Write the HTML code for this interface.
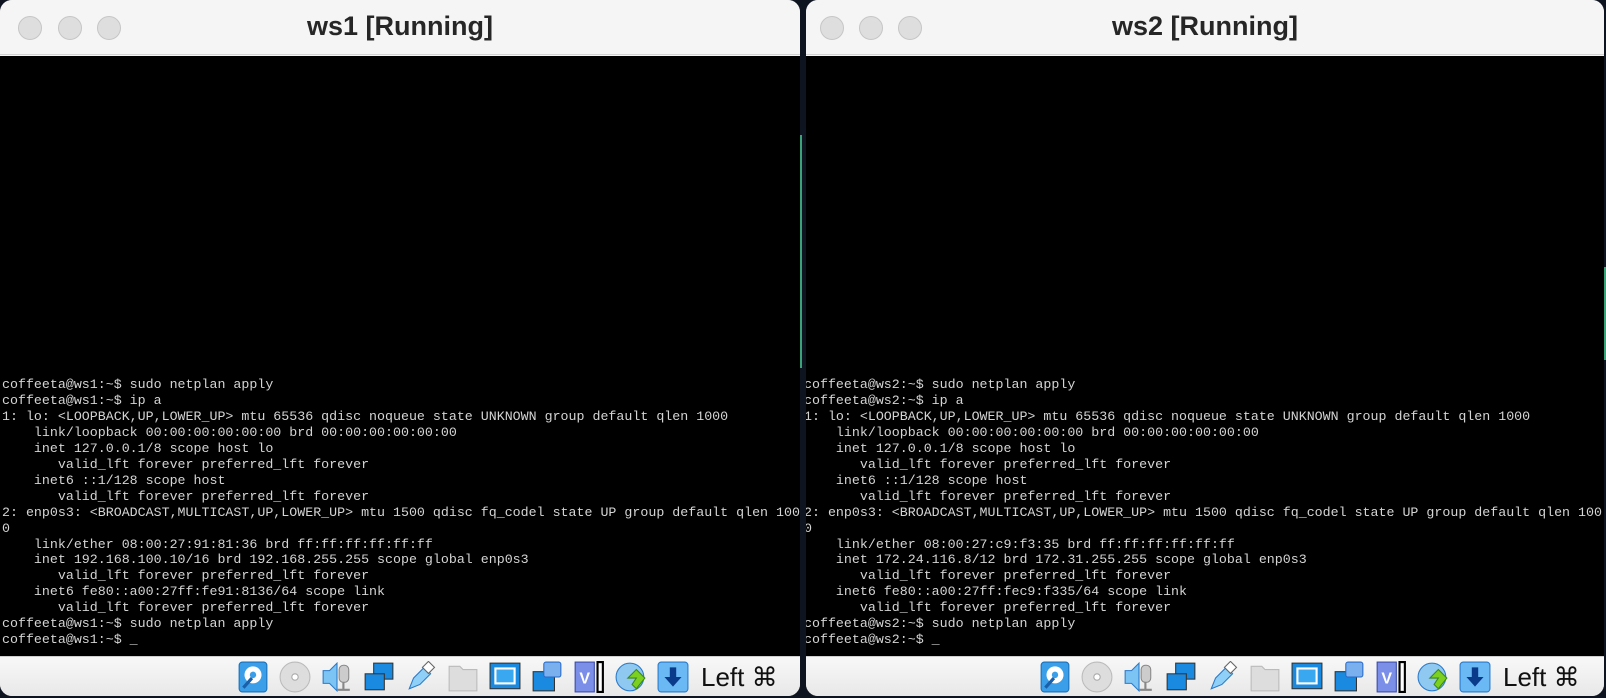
<!DOCTYPE html>
<html><head><meta charset="utf-8"><style>
*{margin:0;padding:0;box-sizing:border-box}
body{width:1606px;height:698px;background:#0f1520;position:relative;overflow:hidden;font-family:"Liberation Sans",sans-serif}
.win{position:absolute;top:0;height:696px;background:#f5f5f5;border-radius:12px;overflow:hidden}
.tb{position:absolute;left:0;right:0;top:0;height:55px;background:#f5f5f5;border-bottom:1px solid #d2d2d2}
.tl{position:absolute;top:16px;width:24px;height:24px;border-radius:50%;background:#dedede;border:1px solid #c6c6c6}
.title{position:absolute;left:0;right:0;top:11px;text-align:center;font-weight:bold;font-size:27px;color:#262626}
.term{position:absolute;left:0;right:0;top:56px;height:600px;background:#000}
pre{position:absolute;left:2px;top:321px;font-family:"Liberation Mono",monospace;font-size:13.3px;line-height:15.95px;color:#d4d4d4;white-space:pre}
.bar{position:absolute;left:0;right:0;top:656px;height:40px;background:linear-gradient(#f8f8f8,#e8e8e8);border-top:1px solid #cfcfcf}
.icons{position:absolute;top:4px;height:32px;display:flex;align-items:center}
.icons svg{width:32px;height:32px;margin-right:10px}
.left{font-size:26px;color:#111;font-weight:500;margin-left:2px}
.green{position:absolute;width:2px;background:#3aa37a}
</style></head><body>

<div class="win" style="left:0;width:800px">
 <div class="tb"><div class="tl" style="left:18px"></div><div class="tl" style="left:58px"></div><div class="tl" style="left:97px"></div><div class="title">ws1 [Running]</div></div>
 <div class="term"><pre>coffeeta@ws1:~$ sudo netplan apply
coffeeta@ws1:~$ ip a
1: lo: &lt;LOOPBACK,UP,LOWER_UP&gt; mtu 65536 qdisc noqueue state UNKNOWN group default qlen 1000
    link/loopback 00:00:00:00:00:00 brd 00:00:00:00:00:00
    inet 127.0.0.1/8 scope host lo
       valid_lft forever preferred_lft forever
    inet6 ::1/128 scope host
       valid_lft forever preferred_lft forever
2: enp0s3: &lt;BROADCAST,MULTICAST,UP,LOWER_UP&gt; mtu 1500 qdisc fq_codel state UP group default qlen 100
0
    link/ether 08:00:27:91:81:36 brd ff:ff:ff:ff:ff:ff
    inet 192.168.100.10/16 brd 192.168.255.255 scope global enp0s3
       valid_lft forever preferred_lft forever
    inet6 fe80::a00:27ff:fe91:8136/64 scope link
       valid_lft forever preferred_lft forever
coffeeta@ws1:~$ sudo netplan apply
coffeeta@ws1:~$ _</pre></div>
 <div class="bar"><div class="icons" style="left:237px">ICONS</div></div>
</div>

<div class="win" style="left:806px;width:798px">
 <div class="tb"><div class="tl" style="left:14px"></div><div class="tl" style="left:53px"></div><div class="tl" style="left:92px"></div><div class="title">ws2 [Running]</div></div>
 <div class="term"><pre style="left:-2px">coffeeta@ws2:~$ sudo netplan apply
coffeeta@ws2:~$ ip a
1: lo: &lt;LOOPBACK,UP,LOWER_UP&gt; mtu 65536 qdisc noqueue state UNKNOWN group default qlen 1000
    link/loopback 00:00:00:00:00:00 brd 00:00:00:00:00:00
    inet 127.0.0.1/8 scope host lo
       valid_lft forever preferred_lft forever
    inet6 ::1/128 scope host
       valid_lft forever preferred_lft forever
2: enp0s3: &lt;BROADCAST,MULTICAST,UP,LOWER_UP&gt; mtu 1500 qdisc fq_codel state UP group default qlen 100
0
    link/ether 08:00:27:c9:f3:35 brd ff:ff:ff:ff:ff:ff
    inet 172.24.116.8/12 brd 172.31.255.255 scope global enp0s3
       valid_lft forever preferred_lft forever
    inet6 fe80::a00:27ff:fec9:f335/64 scope link
       valid_lft forever preferred_lft forever
coffeeta@ws2:~$ sudo netplan apply
coffeeta@ws2:~$ _</pre></div>
 <div class="bar"><div class="icons" style="left:233px">ICONS</div></div>
</div>

<div class="green" style="left:800px;top:135px;height:233px"></div>
<div class="green" style="left:1604px;top:267px;height:93px"></div>

<script>
var ic='<svg viewBox="0 0 30 30"><rect x="2" y="1" width="26" height="28" rx="3" fill="#3a9ee8" stroke="#1a6fb8"/><circle cx="15" cy="13" r="8" fill="#fff"/><circle cx="15" cy="13" r="3" fill="#3a9ee8"/><path d="M6 25 L14 16" stroke="#1a5fa8" stroke-width="3"/></svg>'+
'<svg viewBox="0 0 30 30"><circle cx="15" cy="15" r="14" fill="#ddd" stroke="#bbb"/><circle cx="15" cy="15" r="3" fill="#fff" stroke="#aaa"/></svg>'+
'<svg viewBox="0 0 30 30"><path d="M2 9h6l7-7v26l-7-7H2z" fill="#7cc4f4" stroke="#2a7ac8"/><rect x="17" y="4" width="9" height="16" rx="4" fill="#ccc" stroke="#888"/><path d="M21 20v6M15 27h12" stroke="#888" stroke-width="2"/></svg>'+
'<svg viewBox="0 0 30 30"><rect x="10" y="2" width="18" height="15" fill="#1a8ae0" stroke="#333"/><rect x="2" y="12" width="18" height="15" fill="#1a8ae0" stroke="#333"/></svg>'+
'<svg viewBox="0 0 30 30"><path d="M4 26 L8 16 L18 6 L24 12 L14 22 Z" fill="#8fd0f8" stroke="#2a7ac8"/><rect x="18" y="2" width="8" height="8" transform="rotate(45 22 6)" fill="#fff" stroke="#666"/></svg>'+
'<svg viewBox="0 0 30 30"><path d="M2 5h10l3 3h13v20H2z" fill="#ddd" stroke="#bbb"/></svg>'+
'<svg viewBox="0 0 30 30"><rect x="1" y="2" width="28" height="24" fill="#1a8ae0" stroke="#333"/><rect x="6" y="7" width="18" height="14" fill="#3aa8f0" stroke="#fff" stroke-width="2"/></svg>'+
'<svg viewBox="0 0 30 30"><rect x="2" y="10" width="20" height="18" fill="#1a8ae0" stroke="#333"/><rect x="12" y="1" width="16" height="14" rx="2" fill="#7ab0ee" stroke="#2a6ac8"/></svg>'+
'<svg viewBox="0 0 30 30"><rect x="2" y="1" width="18" height="28" fill="#7b8ee8" stroke="#3a4aa8"/><text x="6" y="21" font-size="15" font-weight="bold" fill="#fff" font-family="Liberation Sans">V</text><rect x="23" y="1" width="5" height="28" fill="#fff" stroke="#000" stroke-width="2"/></svg>'+
'<svg viewBox="0 0 30 30"><circle cx="14" cy="15" r="13" fill="#8fc8f0" stroke="#2a7ac8"/><path d="M12 16 L20 8 L28 16 L20 26 L16 22 L20 16 Z" fill="#7cd020" stroke="#3a8a10"/></svg>'+
'<svg viewBox="0 0 30 30"><rect x="1" y="1" width="28" height="28" rx="3" fill="#6ab8f4" stroke="#2a7ac8"/><path d="M12 6h6v9h5l-8 9-8-9h5z" fill="#0a3a8a"/></svg>'+
'<span class="left">Left ⌘</span>';
document.querySelectorAll('.icons').forEach(function(e){e.innerHTML=ic});
</script>
</body></html>
